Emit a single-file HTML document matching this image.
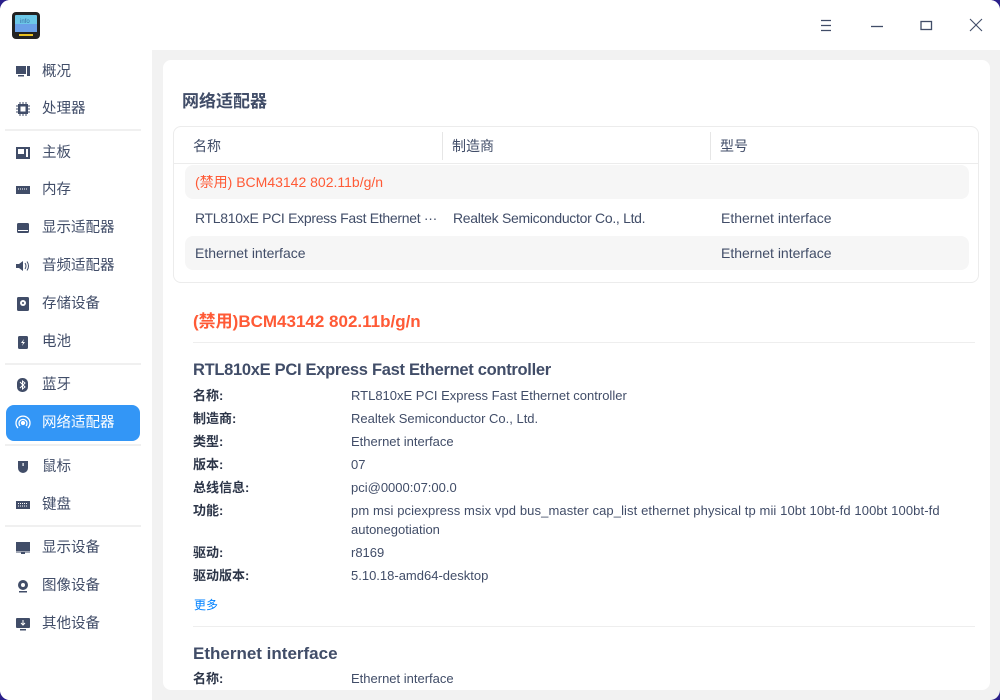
<!DOCTYPE html>
<html><head><meta charset="utf-8"><style>
*{margin:0;padding:0;box-sizing:border-box}
html,body{width:1000px;height:700px;overflow:hidden;background:#2a1f8a}
body{font-family:"Liberation Sans","Noto Sans CJK SC",sans-serif;color:#414d68;position:relative}
.win{position:absolute;left:0;top:0;width:1000px;height:700px;border-radius:10px;background:#f2f2f2;overflow:hidden}
.title{position:absolute;left:0;top:0;width:1000px;height:50px;background:#fff}
.side{position:absolute;left:0;top:50px;width:152px;height:650px;background:#fff}
.it{position:absolute;left:0;height:36px;width:152px;font-size:14.5px;line-height:36px}
.it span{position:absolute;left:42px}
.it svg{position:absolute;left:15px;top:10px}
.sel{position:absolute;left:6px;width:134px;height:36px;background:#3396f6;border-radius:8px}
.sep{position:absolute;left:5px;width:136px;height:2px;background:#f0f0f0}
.card{position:absolute;left:163px;top:60px;width:827px;height:630px;background:#fff;border-radius:8px;overflow:hidden}
.abs{position:absolute;white-space:nowrap}
.h{font-size:17px;font-weight:bold;color:#414d68}
.tbl{position:absolute;left:10px;top:66px;width:806px;height:157px;border:1px solid #ececec;border-radius:8px}
.row{position:absolute;left:11px;width:784px;height:34px;border-radius:8px}
.t{font-size:14px;line-height:34px}
.lab{font-size:13px;font-weight:bold;color:#2c3548;line-height:18px}
.val{font-size:13px;color:#414d68;line-height:18px}
</style></head><body>
<div class="win">
<div class="title">
 <svg style="position:absolute;left:12px;top:12px" width="28" height="27" viewBox="0 0 28 27">
  <rect x="0" y="0" width="28" height="27" rx="4" fill="#222"/>
  <rect x="3" y="3" width="22" height="17" rx="1" fill="#6cc8e8"/>
  <rect x="3" y="12" width="22" height="8" fill="#6aa0e8"/>
  <text x="8" y="11" font-size="6" fill="#3a6aa0" font-family="Liberation Sans">info</text>
  <rect x="7" y="22" width="14" height="2" fill="#e8c020"/>
 </svg>
 <svg style="position:absolute;left:819px;top:19px" width="14" height="13" viewBox="0 0 14 13" stroke="#414d68" stroke-width="1.2"><path d="M2 1.5H12M2 6.5H12M2 11.5H12"/></svg>
 <svg style="position:absolute;left:870px;top:20px" width="14" height="10"><path d="M1 6.5H13" stroke="#414d68" stroke-width="1.3"/></svg>
 <svg style="position:absolute;left:920px;top:20px" width="13" height="12"><rect x="1" y="1.5" width="10.5" height="8" fill="none" stroke="#414d68" stroke-width="1.3"/></svg>
 <svg style="position:absolute;left:969px;top:18px" width="14" height="14"><path d="M1 1L13 13M13 1L1 13" stroke="#414d68" stroke-width="1.1"/></svg>
</div>
<div class="side">
 <div class="it" style="top:4px"><svg width="16" height="16"><rect x="1" y="2" width="10" height="8" fill="#414d68"/><rect x="12" y="2" width="3" height="10" fill="#414d68"/><rect x="3" y="11" width="6" height="1.5" fill="#414d68"/></svg><span>概况</span></div>
 <div class="it" style="top:41px"><svg width="16" height="16"><path d="M1 5H15M1 8H15M1 11H15M5 1V15M8 1V15M11 1V15" stroke="#414d68" stroke-width="1"/><rect x="3" y="3" width="10" height="10" fill="#414d68"/><rect x="5.5" y="5.5" width="5" height="5" fill="#fff"/></svg><span>处理器</span></div>
 <div class="sep" style="top:79px"></div>
 <div class="it" style="top:85px"><svg width="16" height="16"><rect x="1" y="2" width="14" height="12" fill="#414d68"/><rect x="3" y="4" width="6" height="5" fill="#fff"/><rect x="11" y="4" width="2" height="8" fill="#fff"/></svg><span>主板</span></div>
 <div class="it" style="top:122px"><svg width="16" height="16"><rect x="1" y="4" width="14" height="8" fill="#414d68"/><path d="M3 7H13" stroke="#fff" stroke-dasharray="1 1"/></svg><span>内存</span></div>
 <div class="it" style="top:160px"><svg width="16" height="16"><rect x="2" y="3" width="12" height="10" rx="1.5" fill="#414d68"/><rect x="3" y="10" width="10" height="1" fill="#fff"/></svg><span>显示适配器</span></div>
 <div class="it" style="top:198px"><svg width="16" height="16"><path d="M1 6H4L8 3V13L4 10H1Z" fill="#414d68"/><path d="M10 5Q12 8 10 11M12 3.5Q15 8 12 12.5" stroke="#414d68" fill="none"/></svg><span>音频适配器</span></div>
 <div class="it" style="top:236px"><svg width="16" height="16"><rect x="2" y="1" width="12" height="14" rx="1.5" fill="#414d68"/><circle cx="8" cy="7" r="3" fill="#fff"/><circle cx="8" cy="7" r="1" fill="#414d68"/></svg><span>存储设备</span></div>
 <div class="it" style="top:274px"><svg width="16" height="16"><rect x="3" y="2" width="10" height="13" rx="1.5" fill="#414d68"/><path d="M9 5L6 9H8L7 12L10 8H8Z" fill="#fff"/></svg><span>电池</span></div>
 <div class="sep" style="top:313px"></div>
 <div class="it" style="top:317px"><svg width="16" height="16"><rect x="2" y="1" width="11" height="14" rx="5" fill="#414d68"/><path d="M5 5L10 10L7.5 12V4L10 6L5 11" stroke="#fff" fill="none" stroke-width="1"/></svg><span>蓝牙</span></div>
 <div class="sel" style="top:355px"></div>
 <div class="it" style="top:355px;color:#fff"><svg width="16" height="16" fill="none" stroke="#fff" stroke-width="1.3"><circle cx="8" cy="8" r="1.5" fill="#fff"/><path d="M5 11A4 4 0 1 1 11 11M3 13A7 7 0 1 1 13 13"/></svg><span>网络适配器</span></div>
 <div class="sep" style="top:394px"></div>
 <div class="it" style="top:399px"><svg width="16" height="16"><path d="M3 2H13V9A5 5 0 0 1 3 9Z" fill="#414d68"/><rect x="7.5" y="4" width="1.2" height="3" fill="#fff"/></svg><span>鼠标</span></div>
 <div class="it" style="top:437px"><svg width="16" height="16"><rect x="1" y="4" width="14" height="8" fill="#414d68"/><path d="M3 6.5H13M3 9H13" stroke="#fff" stroke-dasharray="1 1"/></svg><span>键盘</span></div>
 <div class="sep" style="top:475px"></div>
 <div class="it" style="top:480px"><svg width="16" height="16"><rect x="1" y="2" width="14" height="9" fill="#414d68"/><rect x="1" y="11.5" width="14" height="1" fill="#414d68"/><rect x="6" y="12" width="4" height="2" fill="#414d68"/></svg><span>显示设备</span></div>
 <div class="it" style="top:518px"><svg width="16" height="16"><circle cx="8" cy="7" r="5" fill="#414d68"/><circle cx="8" cy="7" r="2" fill="#fff"/><rect x="4" y="13" width="8" height="1.5" fill="#414d68"/></svg><span>图像设备</span></div>
 <div class="it" style="top:556px"><svg width="16" height="16"><rect x="1" y="2" width="14" height="10" rx="1" fill="#414d68"/><path d="M8 4V9M6 7L8 9L10 7" stroke="#fff" fill="none"/><rect x="5" y="13" width="6" height="1.5" fill="#414d68"/></svg><span>其他设备</span></div>
</div>
<div class="card">
 <div class="abs h" style="left:19px;top:27px">网络适配器</div>
 <div class="tbl">
  <div class="abs t" style="left:19px;top:2px">名称</div>
  <div class="abs t" style="left:278px;top:2px">制造商</div>
  <div class="abs t" style="left:546px;top:2px">型号</div>
  <div class="abs" style="left:268px;top:5px;width:1px;height:28px;background:#e6e6e6"></div>
  <div class="abs" style="left:536px;top:5px;width:1px;height:28px;background:#e6e6e6"></div>
  <div class="abs" style="left:0;top:36px;width:804px;height:1px;background:#ececec"></div>
  <div class="row" style="top:38px;background:#f6f6f6"></div>
  <div class="row" style="top:109px;background:#f6f6f6"></div>
  <div class="abs t" style="left:21px;top:38px;color:#ff5a36">(禁用) BCM43142 802.11b/g/n</div>
  <div class="abs t" style="left:21px;top:74px;letter-spacing:-0.3px">RTL810xE PCI Express Fast Ethernet ···</div>
  <div class="abs t" style="left:279px;top:74px;letter-spacing:-0.3px">Realtek Semiconductor Co., Ltd.</div>
  <div class="abs t" style="left:547px;top:74px">Ethernet interface</div>
  <div class="abs t" style="left:21px;top:109px">Ethernet interface</div>
  <div class="abs t" style="left:547px;top:109px">Ethernet interface</div>
 </div>
 <div class="abs h" style="left:30px;top:247px;color:#ff5a36">(禁用)BCM43142 802.11b/g/n</div>
 <div class="abs" style="left:30px;top:282px;width:782px;height:1px;background:#eee"></div>
 <div class="abs h" style="left:30px;top:301px;font-size:16.5px;letter-spacing:-0.3px">RTL810xE PCI Express Fast Ethernet controller</div>
 <div class="abs lab" style="left:30px;top:327px">名称:</div><div class="abs val" style="left:188px;top:327px">RTL810xE PCI Express Fast Ethernet controller</div>
 <div class="abs lab" style="left:30px;top:350px">制造商:</div><div class="abs val" style="left:188px;top:350px">Realtek Semiconductor Co., Ltd.</div>
 <div class="abs lab" style="left:30px;top:373px">类型:</div><div class="abs val" style="left:188px;top:373px">Ethernet interface</div>
 <div class="abs lab" style="left:30px;top:396px">版本:</div><div class="abs val" style="left:188px;top:396px">07</div>
 <div class="abs lab" style="left:30px;top:419px">总线信息:</div><div class="abs val" style="left:188px;top:419px">pci@0000:07:00.0</div>
 <div class="abs lab" style="left:30px;top:442px">功能:</div><div class="abs val" style="left:188px;top:442px;letter-spacing:0.1px">pm msi pciexpress msix vpd bus_master cap_list ethernet physical tp mii 10bt 10bt-fd 100bt 100bt-fd</div>
 <div class="abs val" style="left:188px;top:461px">autonegotiation</div>
 <div class="abs lab" style="left:30px;top:484px">驱动:</div><div class="abs val" style="left:188px;top:484px">r8169</div>
 <div class="abs lab" style="left:30px;top:507px">驱动版本:</div><div class="abs val" style="left:188px;top:507px">5.10.18-amd64-desktop</div>
 <div class="abs" style="left:31px;top:536px;font-size:12px;color:#0081ff">更多</div>
 <div class="abs" style="left:30px;top:566px;width:782px;height:1px;background:#eee"></div>
 <div class="abs h" style="left:30px;top:584px">Ethernet interface</div>
 <div class="abs lab" style="left:30px;top:610px">名称:</div><div class="abs val" style="left:188px;top:610px">Ethernet interface</div>
</div>
</div>
</body></html>
